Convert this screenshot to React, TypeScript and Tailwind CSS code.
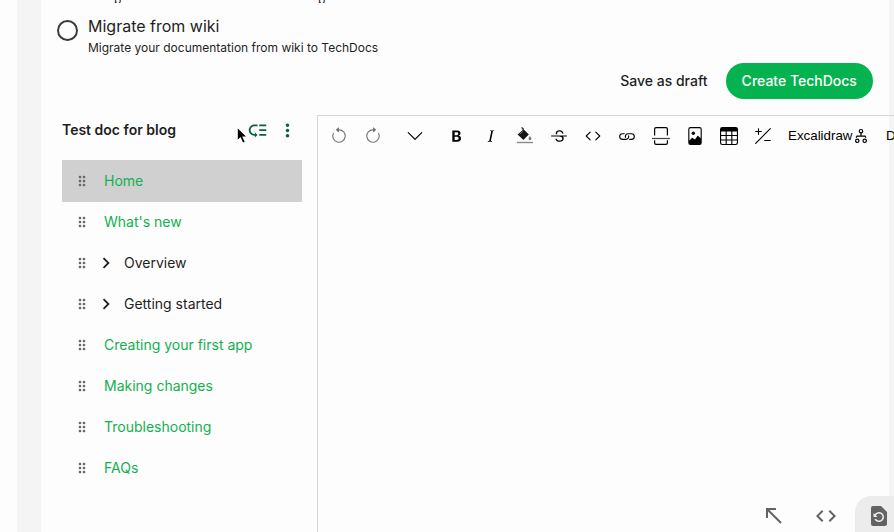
import React from 'react';
import {
  BsArrowCounterclockwise, BsArrowClockwise, BsChevronDown, BsTypeBold, BsTypeItalic,
  BsTypeStrikethrough, BsCode, BsLink, BsFileImage, BsTable, BsPlusSlashMinus,
} from 'react-icons/bs';
import {
  MdDragIndicator, MdLowPriority, MdMoreVert, MdChevronRight, MdRestorePage, MdCode,
} from 'react-icons/md';

const pages = [
  { title: 'Home', selected: true },
  { title: "What's new" },
  { title: 'Overview', group: true },
  { title: 'Getting started', group: true },
  { title: 'Creating your first app' },
  { title: 'Making changes' },
  { title: 'Troubleshooting' },
  { title: 'FAQs' },
];

function PageBreak() {
  return (
    <svg width="18" height="18" viewBox="0 0 18 18" fill="none" stroke="currentColor" strokeWidth="1.2">
      <path d="M2.6 8.6V2Q2.6.6 4 .6H14Q15.4.6 15.4 2V8.6M2.6 13.2V16Q2.6 17.4 4 17.4H14Q15.4 17.4 15.4 16V13.2" />
      <path d="M0 11.5H18" stroke="#444" />
    </svg>
  );
}

function FillBucket() {
  return (
    <svg width="18" height="18" viewBox="0 0 18 18">
      <path d="M6.8 1.6L12.8 7.4L7.4 13L1.6 7.6L6.5 3.2Z" fill="#161616" />
      <path d="M3.8 7.2L6.8 4.3" stroke="#777" strokeWidth="1" />
      <path d="M5.6 .4L7.5 2.2" stroke="#333" strokeWidth="1.4" />
      <path d="M13.9 9Q15.6 11 15.4 11.8A1.4 1.4 0 0 1 12.5 11.8Q12.5 11 13.9 9Z" fill="#777" />
      <path d="M1 15.5H17" stroke="#888" strokeWidth="1.4" />
    </svg>
  );
}

function Diagram() {
  return (
    <svg width="14" height="16" viewBox="0 0 14 16" fill="none" stroke="currentColor" strokeWidth="1.2">
      <circle cx="7" cy="3.2" r="1.7" />
      <circle cx="3.3" cy="12.8" r="1.7" />
      <circle cx="10.7" cy="12.8" r="1.7" />
      <path d="M7 4.9V8.2M2 9.6L3 8.2H11L12 9.6" />
    </svg>
  );
}

function Tool({ children }: { children: React.ReactNode }) {
  return <div className="flex w-[34px] shrink-0 items-center justify-center">{children}</div>;
}

export default function App() {
  return (
    <div className="relative flex h-[532px] w-[894px] overflow-hidden bg-[#f4f4f4] font-['Inter',sans-serif] text-[#1f1f1f]">
      <div className="mr-6 w-[17px] shrink-0 bg-[#fdfdfd]" />
      <main className="flex w-[848px] shrink-0 flex-col bg-[#fdfdfd]">
        <div className="flex h-[3px] items-end overflow-hidden pl-[73px] text-xs leading-[7px]">
          <span className="w-[204px]">p</span>
          <span>p</span>
        </div>
        <section className="flex h-[60px] gap-[10px] pl-4 pt-[13px]">
          <span className="mt-1 size-[21px] shrink-0 rounded-full border-2 border-[#3b3b3b]" />
          <div>
            <h2 className="text-base leading-5">Migrate from wiki</h2>
            <p className="mt-1 text-xs leading-4">Migrate your documentation from wiki to TechDocs</p>
          </div>
        </section>
        <div className="flex h-9 items-center justify-end gap-[18px] pr-4 text-sm font-medium">
          <span>Save as draft</span>
          <button className="h-9 w-[147.5px] rounded-full bg-[#04b34f] text-white">Create TechDocs</button>
        </div>
        <div className="mt-4 flex flex-1">
          <aside className="w-[276px] shrink-0 pl-[21px]">
            <div className="flex h-[30px] items-center">
              <h3 className="w-[184.5px] text-sm font-semibold">Test doc for blog</h3>
              <MdLowPriority size={21} className="text-[#0b5f45]" />
              <MdMoreVert size={21} className="ml-[9px] text-[#0b5f45]" />
            </div>
            <ul className="mt-[15px] w-[240px]">
              {pages.map((p) => (
                <li
                  key={p.title}
                  className={p.selected ? '-mb-px flex h-[42px] items-center bg-[#d0d0d0] pl-3' : 'flex h-[41px] items-center pl-3'}
                >
                  <MdDragIndicator size={16} className="text-[#666]" />
                  {p.group && <MdChevronRight size={22} className="ml-[5px] text-[#1f1f1f]" />}
                  <span className={p.group ? 'ml-[7px] text-sm text-[#1f1f1f]' : 'ml-[14px] text-sm text-[#12b04f]'}>{p.title}</span>
                </li>
              ))}
            </ul>
          </aside>
          <section className="flex w-[620px] shrink-0 flex-col border-l border-t border-[#d6d6d6]">
            <div className="flex h-10 shrink-0 items-center pl-[4px] text-black">
              <Tool><BsArrowCounterclockwise size={18} className="text-[#777]" /></Tool>
              <Tool><BsArrowClockwise size={18} className="text-[#777]" /></Tool>
              <span className="w-[8px]" />
              <Tool><BsChevronDown size={18} /></Tool>
              <span className="w-[8px]" />
              <Tool><BsTypeBold size={18} /></Tool>
              <Tool><BsTypeItalic size={18} /></Tool>
              <Tool><FillBucket /></Tool>
              <Tool><BsTypeStrikethrough size={18} /></Tool>
              <Tool><BsCode size={18} /></Tool>
              <Tool><BsLink size={18} /></Tool>
              <Tool><PageBreak /></Tool>
              <Tool><BsFileImage size={18} /></Tool>
              <Tool><BsTable size={18} /></Tool>
              <Tool><BsPlusSlashMinus size={18} /></Tool>
              <span className="ml-2 w-[66px] shrink-0 font-['Liberation_Sans',Arial,sans-serif] text-[13.333px]">Excalidraw</span>
              <Diagram />
              <span className="ml-[18px] font-['Liberation_Sans',Arial,sans-serif] text-[13.333px]">D</span>
            </div>
            <div className="mt-auto flex h-9 items-center text-[#636363]">
              <svg width="16" height="16" viewBox="0 0 16 16" fill="none" stroke="currentColor" strokeWidth="2" className="ml-[448px] mt-1">
                <path d="M1 10V1H10M1.5 1.5L15 15" />
              </svg>
              <MdCode size={24} className="ml-8 mt-1" />
              <div className="ml-[17px] flex h-9 w-[48px] items-center rounded-tl-2xl bg-[#ececec] pl-3 pt-1">
                <MdRestorePage size={24} />
              </div>
            </div>
          </section>
        </div>
      </main>
      <svg className="absolute left-[236px] top-[126px]" width="13" height="19" viewBox="0 0 12 18">
        <path d="M1 1V14L4 11.3L6.2 16.3L8.7 15.2L6.5 10.4H10.5Z" fill="#000" stroke="#fff" />
      </svg>
    </div>
  );
}
